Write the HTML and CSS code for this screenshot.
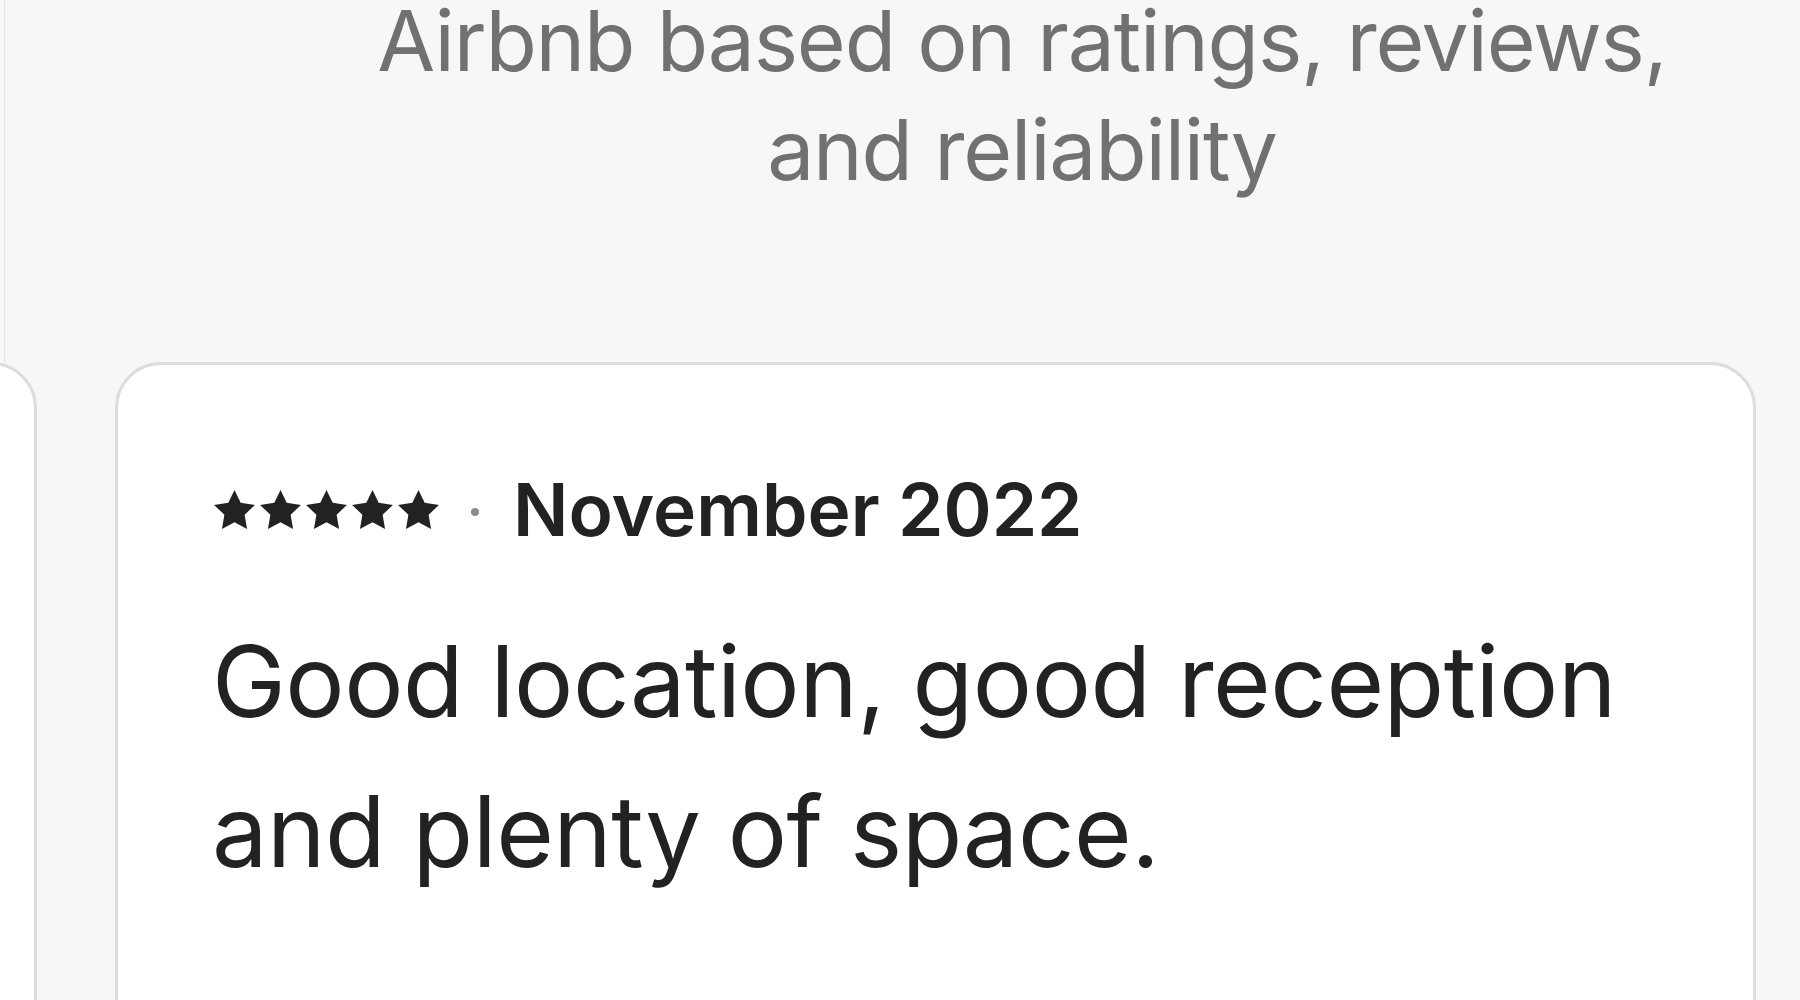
FILE: index.html
```html
<!DOCTYPE html>
<html lang="en">
<head>
  <meta charset="UTF-8">
  <title>Guest favourite reviews</title>
  <link rel="stylesheet" href="styles.css">
</head>
<body>

  <div class="screen">
    <p class="intro">Airbnb based on ratings, reviews, and reliability</p>

    <div class="reviews">
      <div class="review-card"></div>

      <div class="review-card">
        <div class="review-meta">
          <span class="stars">
            <svg viewBox="0 0 24 24"><path d="M12 1l3.3 6.9 7.6 1.1-5.5 5.3 1.3 7.5L12 18.3l-6.7 3.5 1.3-7.5L1.1 9l7.6-1.1z"/></svg>
            <svg viewBox="0 0 24 24"><path d="M12 1l3.3 6.9 7.6 1.1-5.5 5.3 1.3 7.5L12 18.3l-6.7 3.5 1.3-7.5L1.1 9l7.6-1.1z"/></svg>
            <svg viewBox="0 0 24 24"><path d="M12 1l3.3 6.9 7.6 1.1-5.5 5.3 1.3 7.5L12 18.3l-6.7 3.5 1.3-7.5L1.1 9l7.6-1.1z"/></svg>
            <svg viewBox="0 0 24 24"><path d="M12 1l3.3 6.9 7.6 1.1-5.5 5.3 1.3 7.5L12 18.3l-6.7 3.5 1.3-7.5L1.1 9l7.6-1.1z"/></svg>
            <svg viewBox="0 0 24 24"><path d="M12 1l3.3 6.9 7.6 1.1-5.5 5.3 1.3 7.5L12 18.3l-6.7 3.5 1.3-7.5L1.1 9l7.6-1.1z"/></svg>
          </span>
          <span class="dot"></span>
          <span class="review-date">November 2022</span>
        </div>
        <p class="review-text">Good location, good reception and plenty of space.</p>
      </div>
    </div>
  </div>

</body>
</html>
```

FILE: styles.css
```css
html, body {
  margin: 0;
  height: 100%;
}

body {
  font-family: Inter, "Noto Sans", sans-serif;
  background: #f7f7f7;
  color: #222222;
  overflow: hidden;
}

.screen {
  height: 100%;
  margin-left: 4px;
  border-left: 1px solid #e4e4e4;
  background: #f7f7f7;
}

.intro {
  width: 1380px;
  margin: -14px 0 0 327px;
  text-align: center;
  font-size: 84px;
  line-height: 109px;
  letter-spacing: -1.2px;
  color: #717171;
}

.reviews {
  display: flex;
  gap: 78px;
  margin-top: 158px;
  margin-left: -1609px;
}

.review-card {
  flex: 0 0 1641px;
  box-sizing: border-box;
  height: 900px;
  padding: 100px 94px 0;
  background: #ffffff;
  border: 3px solid #dddddd;
  border-radius: 46px;
}

.review-meta {
  display: flex;
  align-items: center;
}

.stars {
  display: flex;
  gap: 1px;
}

.stars svg {
  width: 45px;
  height: 45px;
  fill: #222222;
}

.dot {
  width: 8px;
  height: 8px;
  margin: 4px 34px 0 30px;
  border-radius: 50%;
  background: #8a8a8a;
}

.review-date {
  font-size: 73px;
  font-weight: 600;
  line-height: 90px;
  letter-spacing: 0;
}

.review-text {
  margin: 51px 0 0;
  font-size: 99px;
  line-height: 150px;
  letter-spacing: -0.5px;
}
```
